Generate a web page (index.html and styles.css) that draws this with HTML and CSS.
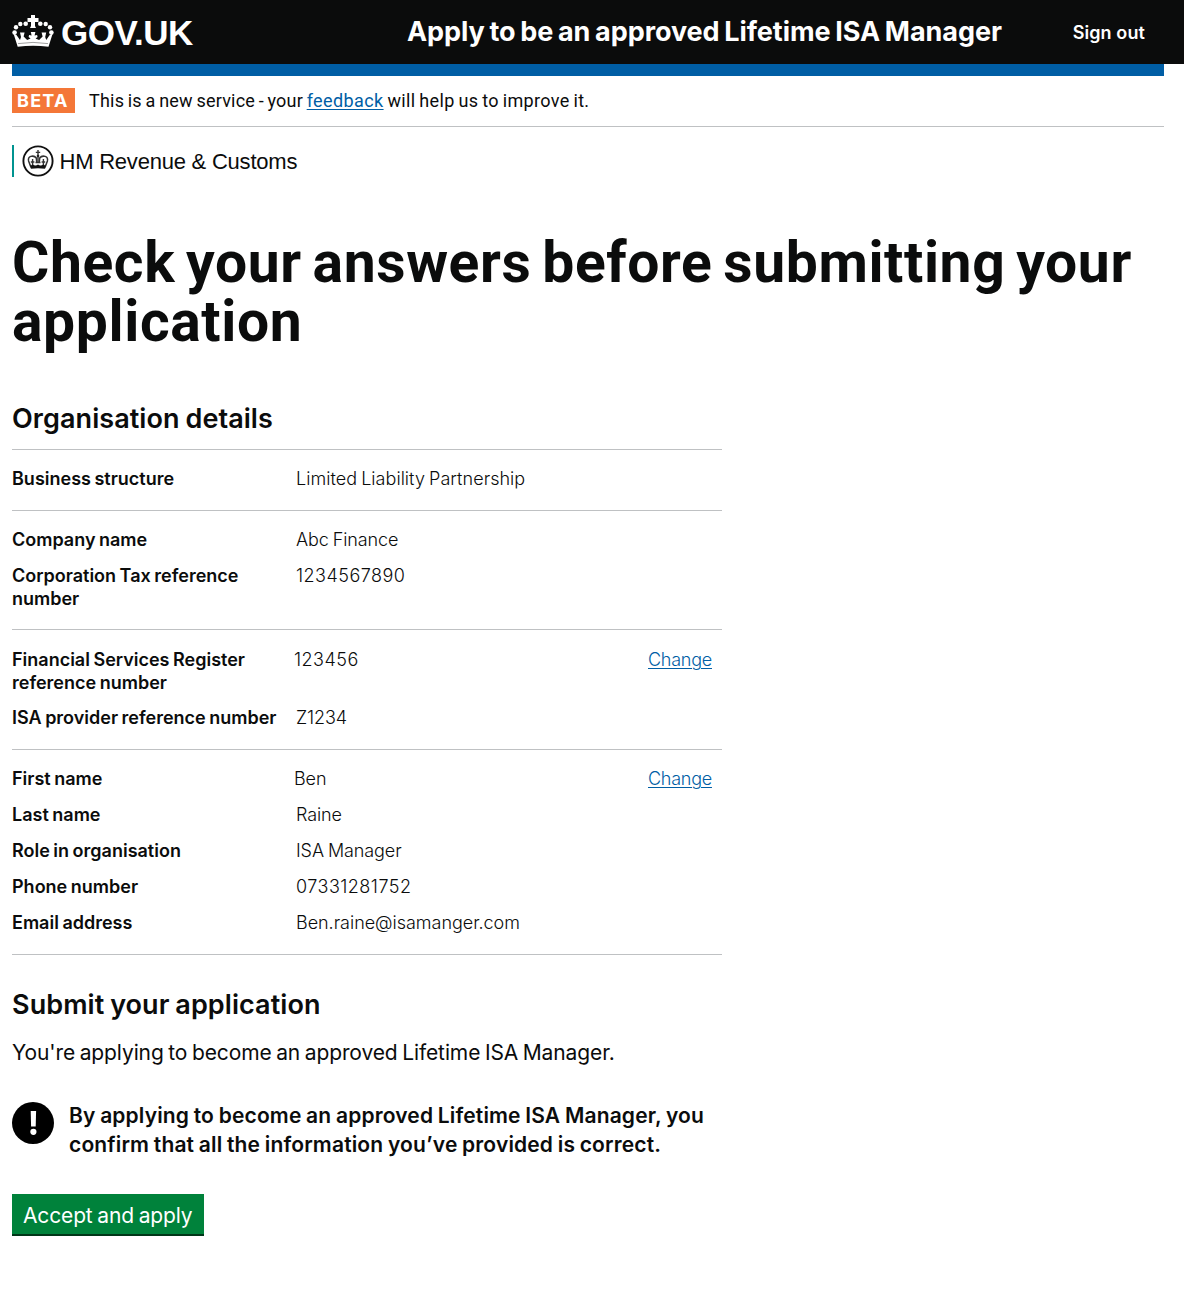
FILE: index.html
```html
<!DOCTYPE html>
<html lang="en">
<head>
<meta charset="utf-8">
<title>Check your answers before submitting your application</title>
<link rel="stylesheet" href="styles.css">
</head>
<body>
<header class="header">
  <a class="logo" href="#">
    <svg class="crown" viewBox="0 0 42 34" width="42" height="34" aria-hidden="true">
      <g fill="#fff">
        <path d="M19 0h4v3h3.500v4H23v4l1 2h-6l1-2V7h-3.500V3H19z"/>
        <circle cx="2.600" cy="17.500" r="2.300"/><circle cx="4" cy="12.300" r="2.200"/>
        <circle cx="8.300" cy="9" r="2.200"/><circle cx="13.700" cy="8.800" r="2.300"/>
        <circle cx="28.300" cy="8.800" r="2.300"/><circle cx="33.700" cy="9" r="2.200"/>
        <circle cx="38" cy="12.300" r="2.200"/><circle cx="39.400" cy="17.500" r="2.300"/>
        <path d="M1.500 18.500l3 1.500 3.500 5 1-3-1-4.500h4.600l-1 4 3.500 3.500 3.500-1.500-2-1.500.5-2 2.500.5-.8-3.500h4.600l-.8 3.500 2.500-.5.5 2-2 1.500 3.500 1.500 3.500-3.500-1-4h4.600l-1 4.500 1 3 3.500-5 3-1.500-4.200 13.300Q21 29.500 5.700 31.800z"/>
      </g>
      <path d="M6 28.600Q21 26.200 36 28.600" fill="none" stroke="#777" stroke-width=".7"/>
    </svg>
    <span class="logo-text">GOV.UK</span>
  </a>
  <a class="service" href="#">Apply to be an approved Lifetime ISA Manager</a>
  <a class="sign-out" href="#">Sign out</a>
</header>
<div class="container">
  <div class="bar"></div>
  <div class="phase">
    <strong class="tag">BETA</strong>
    <span class="phase-text"><span class="phase-lead">This is a new service - your </span><a class="link feedback" href="#">feedback</a> will help us to improve it.</span>
  </div>
  <div class="org">
    <svg class="crest" viewBox="0 0 32 32" width="32" height="32" aria-hidden="true">
      <circle cx="16" cy="16" r="14.600" fill="#fff" stroke="#111" stroke-width="1.900"/>
      <g fill="none" stroke="#333" stroke-width="1.500">
        <path d="M9 22.500L6.600 16q-.8-3.500 2.200-4.600 3.600-1 5.500 1.600l.4 4M23 22.500l2.400-6.500q.8-3.500-2.200-4.600-3.600-1-5.500 1.600l-.4 4"/>
        <path d="M16 5v13M13.800 7.400h4.400M10.600 14v6M8.800 17h3.600M21.400 14v6M19.600 17h3.600M13.500 17.500h5" stroke-width="1.400"/>
      </g>
      <circle cx="16" cy="11" r="1.300" fill="#222"/>
      <path d="M8.300 19.500q1.200 1.600 2.500 0 2.600 2 5.200 0 2.600 2 5.200 0 1.300 1.600 2.500 0l-.6 4.300q-7.100-1-14.200 0z" fill="#111"/>
    </svg>
    <span class="org-name">HM Revenue &amp; Customs</span>
  </div>
  <main>
    <h1 class="title">Check your answers before submitting your application</h1>
    <h2 class="heading">Organisation details</h2>
    <dl class="section first">
      <div class="row"><dt>Business structure</dt><dd class="structure">Limited Liability Partnership</dd></div>
    </dl>
    <dl class="section company">
      <div class="row"><dt>Company name</dt><dd>Abc Finance</dd></div>
      <div class="row"><dt>Corporation Tax reference number</dt><dd class="wide">1234567890</dd></div>
    </dl>
    <dl class="section register">
      <div class="row"><dt>Financial Services Register reference number</dt><dd class="editable wide">123456</dd><dd class="action"><a class="link" href="#">Change</a></dd></div>
      <div class="row"><dt>ISA provider reference number</dt><dd>Z1234</dd></div>
    </dl>
    <dl class="section person">
      <div class="row"><dt>First name</dt><dd class="editable">Ben</dd><dd class="action"><a class="link" href="#">Change</a></dd></div>
      <div class="row"><dt>Last name</dt><dd>Raine</dd></div>
      <div class="row"><dt>Role in organisation</dt><dd>ISA Manager</dd></div>
      <div class="row"><dt>Phone number</dt><dd class="wide">07331281752</dd></div>
      <div class="row"><dt>Email address</dt><dd class="email">Ben.raine@isamanger.com</dd></div>
    </dl>
    <h2 class="heading submit">Submit your application</h2>
    <p class="lede">You're applying to become an approved Lifetime ISA Manager.</p>
    <div class="warning">
      <svg class="warning-icon" viewBox="0 0 42 42" width="42" height="42" aria-hidden="true">
        <circle cx="21" cy="21" r="21" fill="#000"/>
        <path d="M18.700 9h5.400l-.4 15.500h-4.600z" fill="#fff"/>
        <circle cx="21.400" cy="29.800" r="3.100" fill="#fff"/>
      </svg>
      <strong class="warning-text">By applying to become an approved Lifetime ISA Manager, you confirm that all the information you’ve provided is correct.</strong>
    </div>
    <button class="button" type="button">Accept and apply</button>
  </main>
</div>
</body>
</html>
```

FILE: styles.css
```css
* { box-sizing: border-box; }
body {
  margin: 0;
  background: #fff;
  color: #0b0c0c;
  font-family: Inter, "Liberation Sans", sans-serif;
  font-size: 18px;
  line-height: 23px;
}
h1, h2, p, dl, dd { margin: 0; }
.link { color: #005ea5; text-decoration: underline; text-underline-offset: 2px; text-decoration-thickness: 1px; }

.header { display: flex; align-items: center; height: 64px; padding: 0 39px 0 12px; background: #0b0c0c; }
.header a { color: #fff; text-decoration: none; }
.logo { display: flex; align-items: center; width: 395px; }
.crown { margin-right: 7px; }
.logo-text { font: bold 35px/40px "Liberation Sans", Arial, sans-serif; letter-spacing: -0.5px; margin-top: 1px; }
.service { font-weight: 700; font-size: 27px; line-height: 32px; letter-spacing: -0.06px; word-spacing: -1.6px; white-space: nowrap; }
.sign-out { margin-left: auto; font-weight: 600; letter-spacing: 0.1px; }

.container { margin: 0 20px 0 12px; }
.bar { height: 12px; background: #005ea5; }
.phase { display: flex; align-items: center; height: 51px; padding-bottom: 1px; border-bottom: 1px solid #bfc1c3; }
.tag { width: 63px; height: 25px; padding-left: 5px; background: #f47738; color: #fff; font-size: 18px; line-height: 25px; letter-spacing: 1.25px; }
.phase-text { margin-left: 14px; font-family: Roboto, "Liberation Sans", sans-serif; letter-spacing: 0.35px; word-spacing: -1px; }
.phase-lead { letter-spacing: 0.2px; }
.feedback { letter-spacing: 0.4px; }
.org { display: flex; align-items: center; height: 32px; margin-top: 18px; padding-left: 7.5px; border-left: 2px solid #009390; }
.org-name { margin: 1px 0 0 6px; font: 22px/28px "Liberation Sans", Arial, sans-serif; letter-spacing: -0.22px; }

.title { margin-top: 56px; font-family: Roboto, "Liberation Sans", sans-serif; font-size: 57px; line-height: 59px; font-weight: 700; letter-spacing: 0.62px; word-spacing: -4px; }
.heading { margin-top: 52px; font-size: 27px; line-height: 32px; font-weight: 600; letter-spacing: 0.07px; word-spacing: -1px; }

.section { display: flex; flex-direction: column; gap: 13px; width: 710px; padding-top: 17px; border-top: 1px solid #bfc1c3; }
.first { margin-top: 14px; padding-bottom: 20px; }
.company { padding-bottom: 19px; }
.register { gap: 12px; padding: 18px 0 20px; }
.person { padding: 17px 0 20px; border-bottom: 1px solid #bfc1c3; }
.row { display: grid; grid-template-columns: 284px 352px 74px; }
dt { font-weight: 600; word-spacing: -1px; padding-right: 10px; }
dd { font-weight: 350; letter-spacing: -0.1px; word-spacing: -1px; }
.structure { letter-spacing: 0.04px; }
.email { letter-spacing: -0.03px; }
.editable { margin-left: -2px; }
.wide { letter-spacing: 0.48px; }
.action { letter-spacing: -0.25px; }

.submit { margin-top: 34px; }
.lede { margin-top: 17px; font-size: 21px; line-height: 29px; letter-spacing: -0.11px; word-spacing: -1.2px; }
.warning { display: flex; align-items: flex-start; width: 710px; margin-top: 34px; }
.warning-icon { flex: none; margin: 1px 15px 0 0; }
.warning-text { font-size: 21px; line-height: 29px; font-weight: 600; letter-spacing: 0.15px; word-spacing: -0.8px; }
.button { display: block; width: 192px; height: 42px; margin-top: 35px; padding: 3px 0 0 11px; border: 0; border-bottom: 2px solid #003618; background: #00823b; color: #fff; font: 21px/37px Inter, "Liberation Sans", sans-serif; letter-spacing: -0.15px; word-spacing: -1px; text-align: left; }
```
